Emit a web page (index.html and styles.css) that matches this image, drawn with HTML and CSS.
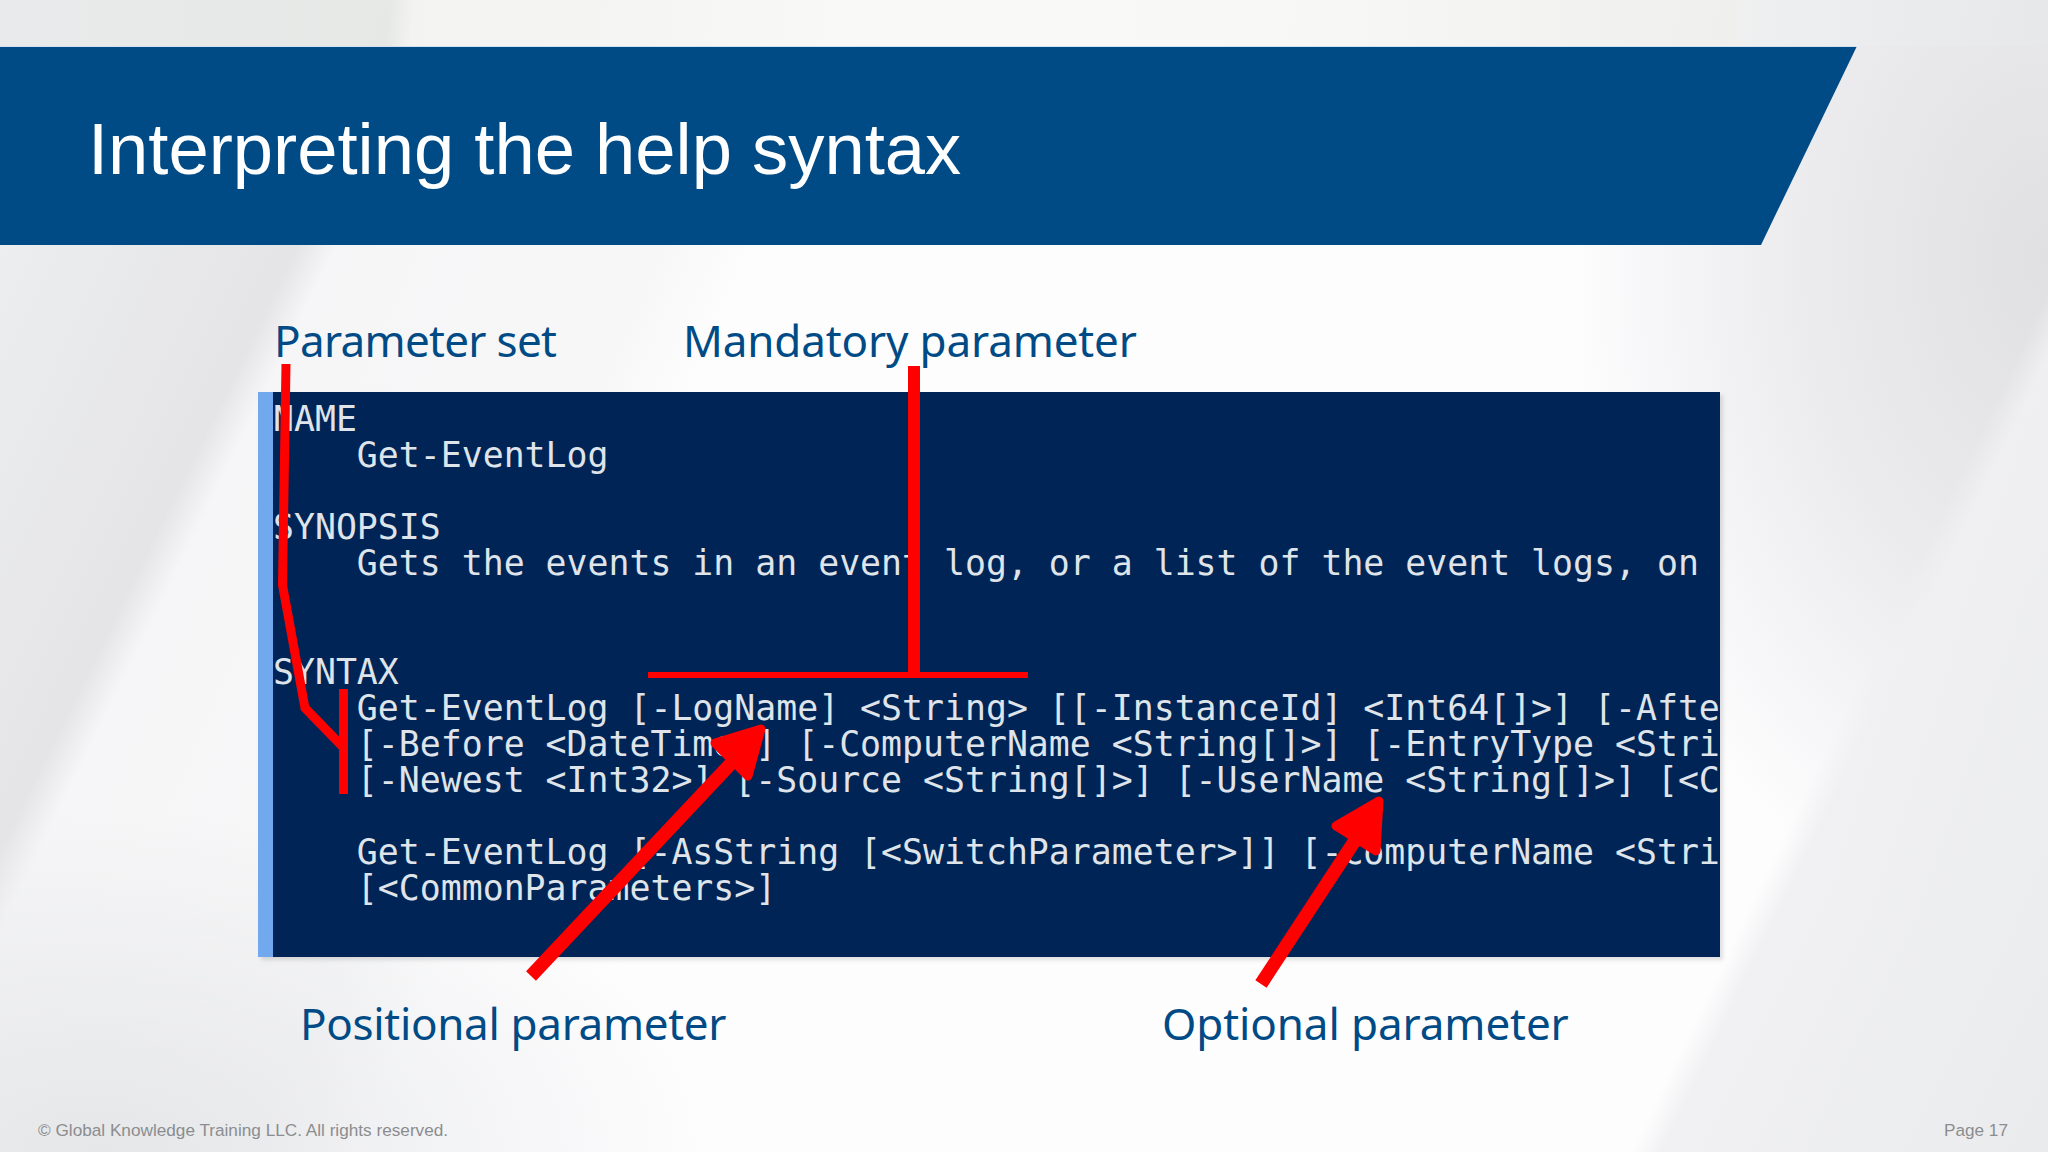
FILE: index.html
```html
<!DOCTYPE html>
<html lang="en">
<head>
<meta charset="utf-8">
<title>Interpreting the help syntax</title>
<link rel="stylesheet" href="styles.css">
</head>
<body>
<main class="slide">
  <header class="banner"><h1 class="title">Interpreting the help syntax</h1></header>
  <div class="labels labels-top">
    <span class="label label-set">Parameter set</span>
    <span class="label label-man">Mandatory parameter</span>
  </div>
  <section class="terminal">
<pre class="console">NAME
    Get-EventLog

SYNOPSIS
    Gets the events in an event log, or a list of the event logs, on


SYNTAX
    Get-EventLog [-LogName] &lt;String&gt; [[-InstanceId] &lt;Int64[]&gt;] [-Afte
    [-Before &lt;DateTime&gt;] [-ComputerName &lt;String[]&gt;] [-EntryType &lt;Stri
    [-Newest &lt;Int32&gt;] [-Source &lt;String[]&gt;] [-UserName &lt;String[]&gt;] [&lt;C

    Get-EventLog [-AsString [&lt;SwitchParameter&gt;]] [-ComputerName &lt;Stri
    [&lt;CommonParameters&gt;]</pre>
  </section>
  <div class="labels labels-bottom">
    <span class="label label-pos">Positional parameter</span>
    <span class="label label-opt">Optional parameter</span>
  </div>
  <footer class="footer">
    <span>© Global Knowledge Training LLC. All rights reserved.</span>
    <span>Page 17</span>
  </footer>
  <svg class="marks" viewBox="0 0 2048 1152" aria-hidden="true">
    <polyline class="mark" points="286,364 282.5,585 305,708 343,747"/>
    <line class="mark" x1="343.5" y1="689" x2="343.5" y2="794"/>
    <line class="mark-bar" x1="914" y1="366" x2="914" y2="675"/>
    <line class="mark-thin" x1="648" y1="675" x2="1028" y2="675"/>
    <line class="shaft" x1="531" y1="976" x2="755" y2="738"/>
    <polygon class="head" points="715,743 761,729 748,776"/>
    <line class="shaft" x1="1261" y1="984" x2="1375" y2="810"/>
    <polygon class="head" points="1336,826 1379,801 1376,851"/>
  </svg>
</main>
</body>
</html>
```

FILE: styles.css
```css
html, body {
  margin: 0;
  padding: 0;
}

.slide {
  position: relative;
  width: 2048px;
  height: 1152px;
  overflow: hidden;
  display: flex;
  flex-direction: column;
  background:
    linear-gradient(116.2deg, rgba(236,237,238,.9) 4%, rgba(228,228,230,.95) 16%, rgba(255,255,255,0) 17.5%),
    linear-gradient(115.9deg, rgba(240,240,242,0) 84%, rgba(240,240,242,.95) 85.2%, #eaebec 100%),
    radial-gradient(ellipse 480px 700px at 2048px 260px, #e0e0e3 0%, rgba(232,232,235,.85) 50%, rgba(255,255,255,0) 100%),
    radial-gradient(ellipse 620px 340px at 100px 1152px, rgba(228,229,231,.9) 0%, rgba(255,255,255,0) 100%),
    linear-gradient(114deg, #f4f4f6 0%, #f7f7f8 30%, rgba(255,255,255,0) 34%),
    #fdfdfe;
  font-family: "Liberation Sans", Arial, sans-serif;
}

.slide::before {
  content: "";
  flex: none;
  height: 46px;
  background: linear-gradient(95deg, #e9eaeb 0%, #e6e8e6 19%, #f3f4f2 20.2%, #f5f6f4 32%, #f9faf8 42%, #f8f9f7 62%, #eff0ee 84.5%, #eeeff0 85.8%, #e7e8ea 100%);
}

.banner {
  height: 199px;
  width: 1857px;
  flex: none;
  display: flex;
  align-items: center;
  padding: 6px 0 0 88px;
  box-sizing: border-box;
  background: linear-gradient(#cfe3f3 1px, #004b85 1px);
  clip-path: polygon(0 0, 100% 0, 1761px 100%, 0 100%);
}

.title {
  margin: 0;
  font-weight: 400;
  font-size: 72.4px;
  color: #fff;
  white-space: nowrap;
}

.labels {
  display: flex;
  flex: none;
}

.labels-top {
  height: 147px;
  align-items: flex-start;
  padding: 67px 0 0 274px;
  box-sizing: border-box;
}

.label {
  font-family: "Noto Sans", "Open Sans", sans-serif;
  font-size: 44px;
  line-height: 56px;
  color: #004b85;
  white-space: nowrap;
}

.label-set {
  width: 409px;
  letter-spacing: -0.7px;
}

.label-man {
  letter-spacing: -0.15px;
}

.terminal {
  flex: none;
  width: 1462px;
  height: 565px;
  margin-left: 258px;
  box-sizing: border-box;
  border-left: 15px solid #71a8ee;
  background: #012456;
  box-shadow: 3px 3px 4px rgba(0,0,0,.12);
  overflow: hidden;
}

.console {
  margin: 0;
  padding: 9px 0 0 0;
  font-family: "DejaVu Sans Mono", "Liberation Mono", monospace;
  font-size: 34.85px;
  line-height: 36.1px;
  color: #dfe4ea;
  white-space: pre;
}

.labels-bottom {
  flex: none;
  padding: 38px 0 0 300px;
  height: 123px;
  box-sizing: border-box;
}

.label-pos {
  width: 862px;
  letter-spacing: -0.33px;
}

.label-opt {
  letter-spacing: -0.1px;
}

.footer {
  flex: none;
  display: flex;
  justify-content: space-between;
  padding: 0 40px 0 38px;
  font-size: 17.2px;
  line-height: 20px;
  margin-top: auto;
  margin-bottom: 12px;
  color: #8b8d90;
}

.marks {
  position: absolute;
  left: 0;
  top: 0;
  width: 2048px;
  height: 1152px;
  pointer-events: none;
}

.mark, .mark-bar, .mark-thin, .shaft {
  fill: none;
  stroke: #f00;
}

.mark { stroke-width: 9; }
.mark-bar { stroke-width: 12; }
.mark-thin { stroke-width: 6; }
.shaft { stroke-width: 13.5; }

.head {
  fill: #f00;
  stroke: #f00;
  stroke-width: 9;
  stroke-linejoin: round;
}
```
